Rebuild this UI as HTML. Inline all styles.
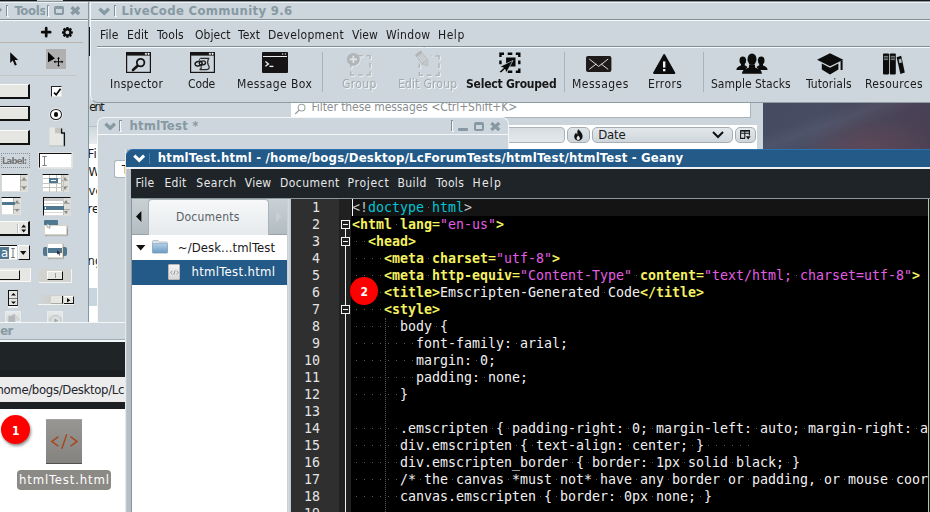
<!DOCTYPE html>
<html lang="en"><head><meta charset="utf-8"><title>desktop</title>
<style>
*{box-sizing:border-box;margin:0;padding:0}
html,body{width:930px;height:512px;overflow:hidden;background:#ccd6dc}
body{position:relative;font-family:"DejaVu Sans Condensed","Liberation Sans",sans-serif;font-size:12px;color:#1a1a1a}
.a{position:absolute}
.t{position:absolute;white-space:pre;height:20px}
svg{position:absolute;overflow:visible}
.code{position:absolute;left:352px;white-space:pre;font-family:"DejaVu Sans Mono","Liberation Mono",monospace;font-size:13.29px;letter-spacing:.003px;line-height:17px;height:17px;color:#f0f0f0}
.ln{position:absolute;left:291px;width:29px;text-align:right;font-family:"DejaVu Sans Mono","Liberation Mono",monospace;font-size:13.29px;letter-spacing:.003px;line-height:17px;height:17px;color:#e4e4e4}
.k{color:#f4f060;font-weight:bold}
.e{color:#f4f060}
.v{color:#e45ee4}
.d{color:#00c4d4}
.g{color:#c8c8c8}
.w{background-image:radial-gradient(circle at 4.5px 50%,#5c5c5c 0,#5c5c5c .5px,rgba(92,92,92,0) .8px);background-size:8px 100%}
</style></head><body>
<div class="a" style="left:0px;top:0px;width:930px;height:1px;background:#14171a;"></div>
<div class="a" style="left:0px;top:1px;width:930px;height:1px;background:#8d969b;"></div>
<div class="a" style="left:37px;top:0px;width:26px;height:1px;background:#c4ccd0;"></div>
<div class="a" style="left:762.5px;top:102.5px;width:167.5px;height:46px;background:linear-gradient(108deg,#454b61 0%,#484d64 35%,#4a4659 62%,#493f53 100%);"><div class="a" style="left:30px;top:14px;width:138px;height:32px;background:radial-gradient(ellipse at 55% 125%,rgba(112,74,86,.6),rgba(112,74,86,0) 72%)"></div><div class="a" style="left:0;top:0;width:168px;height:46px;background:linear-gradient(160deg,rgba(255,255,255,0) 30%,rgba(140,150,175,.10) 42%,rgba(255,255,255,0) 56%)"></div></div>
<div class="a" style="left:90px;top:103px;width:672.5px;height:15px;background:#ccd6dc;"></div>
<div class="a" style="left:291px;top:103px;width:460px;height:15.4px;background:#fff;border-bottom:1px solid #aab4ba;border-right:1px solid #aab4ba"></div>
<svg style="left:294px;top:103px" width="13" height="13" viewBox="0 0 13 13"><circle cx="7.6" cy="4.6" r="3.4" fill="none" stroke="#9aa0a4" stroke-width="1.1"/><path d="M5.2 7 L1.2 11" stroke="#9aa0a4" stroke-width="1.3"/></svg>
<span class="t" style="left:311.50px;top:96.80px;font-size:12px;line-height:20px;color:#8a8e92;letter-spacing:-0.063px;">Filter these messages &lt;Ctrl+Shift+K&gt;</span>
<span class="t" style="left:89.20px;top:96.80px;font-size:12.5px;line-height:20px;color:#1a1a1a;letter-spacing:-1.552px;font-family:"Liberation Sans",sans-serif;">ent</span>
<div class="a" style="left:508px;top:118px;width:249px;height:7px;background:#cbd5db;"></div>
<div class="a" style="left:508px;top:125px;width:249px;height:24px;background:#fff;"></div>
<div class="a" style="left:757px;top:102px;width:5.5px;height:47px;background:#ccd6dc;"></div>
<div class="a" style="left:500px;top:127px;width:64.5px;height:15.5px;background:linear-gradient(#d6dde1,#e4e9ec);border:1px solid #aab4ba;border-radius:4px"></div>
<div class="a" style="left:567px;top:127px;width:22.5px;height:15.5px;background:linear-gradient(#dde3e7,#cfd7dc);border:1px solid #a4aeb4;border-radius:5px"></div>
<svg style="left:573px;top:129px" width="11" height="12" viewBox="0 0 11 12"><path d="M5.2 0.3 C6.8 2 9.6 4 9.6 7.2 C9.6 10 7.6 11.7 5.3 11.7 C3 11.7 1.2 10 1.2 7.6 C1.2 5.6 2.4 4.4 3.2 3.4 C3.3 4.6 3.8 5.2 4.4 5.4 C4.2 3.4 4.4 1.6 5.2 0.3 Z" fill="#111"/><path d="M5.4 11 C4.3 11 3.6 10.2 3.6 9.2 C3.6 8 4.6 7.4 5 6.4 C5.9 7.2 6.9 8 6.9 9.3 C6.9 10.3 6.3 11 5.4 11Z" fill="#dfe5e8"/></svg>
<div class="a" style="left:592px;top:127px;width:141px;height:15.5px;background:linear-gradient(#e2e7ea,#cfd7dc);border:1px solid #a4aeb4;border-radius:5px"></div>
<span class="t" style="left:598.30px;top:124.90px;font-size:13px;line-height:20px;color:#1a1a1a;letter-spacing:-0.219px;">Date</span>
<svg style="left:712px;top:130.5px" width="12" height="8" viewBox="0 0 12 8"><path d="M1 1 L6 6 L11 1" fill="none" stroke="#111" stroke-width="2"/></svg>
<div class="a" style="left:735px;top:127px;width:21px;height:15.5px;background:linear-gradient(#e2e7ea,#cfd7dc);border:1px solid #a4aeb4;border-radius:5px"></div>
<svg style="left:740px;top:130px" width="11" height="10" viewBox="0 0 11 10"><path d="M0.6 0.6 H9.4 V5.4 M0.6 0.6 V8.4 H5 M0.6 3.2 H9.4 M4.8 0.6 V8.4" fill="none" stroke="#1a1a1a" stroke-width="1.1"/><path d="M0.6 0.8 H9.4" stroke="#1a1a1a" stroke-width="1.5"/><path d="M5.8 6.2 H10.6 L8.2 9.4 Z" fill="#111"/></svg>
<div class="a" style="left:88.5px;top:126px;width:9.5px;height:18px;background:linear-gradient(#d0d8dc,#e6ebed);border-top:1px solid #b4bec4"></div>
<div class="a" style="left:88.5px;top:144px;width:9.5px;height:178px;background:#fff;"></div>
<div class="a" style="left:89px;top:288px;width:8.5px;height:18px;background:#c9d5dc;"></div>
<span class="t" style="left:87.60px;top:143.80px;font-size:13px;line-height:20px;color:#1a1a1a;width:10.5px;overflow:hidden;">Fi</span>
<span class="t" style="left:88.60px;top:161.50px;font-size:13px;line-height:20px;color:#1a1a1a;width:10.5px;overflow:hidden;">W</span>
<span class="t" style="left:88.60px;top:180.50px;font-size:13px;line-height:20px;color:#1a1a1a;width:10.5px;overflow:hidden;">ve</span>
<span class="t" style="left:87.60px;top:199.00px;font-size:13px;line-height:20px;color:#1a1a1a;width:10.5px;overflow:hidden;">re</span>
<span class="t" style="left:87.60px;top:250.50px;font-size:13px;line-height:20px;color:#1a1a1a;width:10.5px;overflow:hidden;">ng</span>
<div class="a" style="left:97px;top:117px;width:412px;height:34px;background:#ccd6dc;border:1px solid #f4f7f8;border-bottom:none;border-radius:7px 7px 0 0"></div>
<div class="a" style="left:98px;top:134px;width:410px;height:1px;background:#f4f7f8;"></div>
<div class="a" style="left:98px;top:135px;width:30px;height:187px;background:#ccd6dc;"></div>
<div class="a" style="left:97px;top:135px;width:1px;height:187px;background:#f4f7f8;"></div>
<svg style="left:104px;top:121.6px" width="12.4" height="8.6" viewBox="0 0 12.4 8.6"><path d="M1.5 1.7 L6.2 6.2 L10.9 1.7" fill="none" stroke="#8799a2" stroke-width="3.3" stroke-linejoin="miter"/></svg>
<div class="a" style="left:120.4px;top:121px;width:1px;height:11px;background:#f7f9fa;"></div><div class="a" style="left:120.4px;top:131px;width:2px;height:1px;background:#f7f9fa;"></div><div class="a" style="left:119.4px;top:120px;width:1px;height:11px;background:#7f9099;"></div><div class="a" style="left:119.4px;top:120px;width:2.4px;height:1px;background:#7f9099;"></div>
<span class="t" style="left:129.40px;top:116.00px;font-size:13px;line-height:20px;color:#8799a2;font-weight:700;letter-spacing:0.219px;">htmlTest *</span>
<div class="a" style="left:452px;top:121px;width:1px;height:11px;background:#f7f9fa;"></div><div class="a" style="left:452px;top:131px;width:2px;height:1px;background:#f7f9fa;"></div><div class="a" style="left:451px;top:120px;width:1px;height:11px;background:#7f9099;"></div><div class="a" style="left:451px;top:120px;width:2.4px;height:1px;background:#7f9099;"></div>
<div class="a" style="left:458.3px;top:128.3px;width:9.4px;height:2.6px;background:#8799a2;border-radius:1px"></div>
<div class="a" style="left:474.2px;top:121.8px;width:9.4px;height:9px;background:transparent;border:2px solid #8799a2;border-top-width:3px;border-radius:2px"></div>
<svg style="left:489.5px;top:121.8px" width="10.6" height="9" viewBox="0 0 10.6 9"><path d="M1.3 1 L9.3 8 M9.3 1 L1.3 8" stroke="#8799a2" stroke-width="3.2"/></svg>
<div class="a" style="left:114px;top:159.5px;width:14px;height:18px;background:#fff;border:1px solid #aab4ba;border-right:none;border-radius:3px 0 0 3px"></div>
<span class="t" style="left:121.80px;top:159.80px;font-size:13px;line-height:20px;color:#1a1a1a;">T</span>
<div class="a" style="left:0px;top:2px;width:88.5px;height:320px;background:#ccd6dc;border-right:1px solid #8398a5"></div>
<svg style="left:-10px;top:6.5px" width="12.4" height="8.6" viewBox="0 0 12.4 8.6"><path d="M1.5 1.7 L6.2 6.2 L10.9 1.7" fill="none" stroke="#8799a2" stroke-width="3.3" stroke-linejoin="miter"/></svg>
<div class="a" style="left:7px;top:6px;width:1px;height:11px;background:#f7f9fa;"></div><div class="a" style="left:7px;top:16px;width:2px;height:1px;background:#f7f9fa;"></div><div class="a" style="left:6px;top:5px;width:1px;height:11px;background:#7f9099;"></div><div class="a" style="left:6px;top:5px;width:2.4px;height:1px;background:#7f9099;"></div>
<div class="a" style="left:14px;top:2px;width:31.3px;height:17px;background:transparent;overflow:hidden"><span class="t" style="left:0.40px;top:-1.50px;font-size:13px;line-height:20px;color:#8799a2;font-weight:700;letter-spacing:-0.308px;">Tools</span></div>
<div class="a" style="left:47.6px;top:6px;width:1px;height:11px;background:#f7f9fa;"></div><div class="a" style="left:47.6px;top:16px;width:2px;height:1px;background:#f7f9fa;"></div><div class="a" style="left:46.6px;top:5px;width:1px;height:11px;background:#7f9099;"></div><div class="a" style="left:46.6px;top:5px;width:2.4px;height:1px;background:#7f9099;"></div>
<div class="a" style="left:54.4px;top:6.4px;width:9.4px;height:8.8px;background:transparent;border:2px solid #8799a2;border-top-width:3px;border-radius:2px"></div>
<svg style="left:69.8px;top:6.2px" width="10.6" height="9.2" viewBox="0 0 10.6 9.2"><path d="M1.5 1.2 L9.1 8 M9.1 1.2 L1.5 8" stroke="#8799a2" stroke-width="3.5"/></svg>
<div class="a" style="left:0px;top:2px;width:88px;height:1px;background:#eef2f4;"></div>
<div class="a" style="left:0px;top:19px;width:88px;height:1px;background:#7f9099;"></div>
<div class="a" style="left:0px;top:20px;width:88px;height:1px;background:#f7f9fa;"></div>
<svg style="left:41px;top:27.3px" width="10.4" height="10.4" viewBox="0 0 10.4 10.4"><path d="M5.2 1.2 V9.2 M1.2 5.2 H9.2" stroke="#0c0c0c" stroke-width="2.7" stroke-linecap="round"/></svg>
<svg style="left:62px;top:27.2px" width="10.8" height="10.8" viewBox="-5.4 -5.4 10.8 10.8"><g fill="#0c0c0c"><rect x="-1.25" y="-5.4" width="2.5" height="3" rx="0.5" transform="rotate(0)"/><rect x="-1.25" y="-5.4" width="2.5" height="3" rx="0.5" transform="rotate(45)"/><rect x="-1.25" y="-5.4" width="2.5" height="3" rx="0.5" transform="rotate(90)"/><rect x="-1.25" y="-5.4" width="2.5" height="3" rx="0.5" transform="rotate(135)"/><rect x="-1.25" y="-5.4" width="2.5" height="3" rx="0.5" transform="rotate(180)"/><rect x="-1.25" y="-5.4" width="2.5" height="3" rx="0.5" transform="rotate(225)"/><rect x="-1.25" y="-5.4" width="2.5" height="3" rx="0.5" transform="rotate(270)"/><rect x="-1.25" y="-5.4" width="2.5" height="3" rx="0.5" transform="rotate(315)"/></g><circle r="3" fill="none" stroke="#0c0c0c" stroke-width="2.1"/></svg>
<div class="a" style="left:0px;top:42px;width:83px;height:1px;background:#b9b4ae;"></div>
<svg style="left:10px;top:52px" width="9" height="15" viewBox="0 0 9 15"><path d="M0.2 0.3 L0.2 11 L2.8 8.6 L4.8 13.6 L6.8 12.8 L4.7 7.9 L8.2 7.9 Z" fill="#0a0a0a"/></svg>
<div class="a" style="left:46px;top:49px;width:20px;height:19.7px;background:#b0b0b0;"></div>
<svg style="left:47.9px;top:51.7px" width="16" height="15" viewBox="0 0 16 15"><path d="M0 0 L0 10.3 L6.9 6.4 Z" fill="#050505"/><path d="M10.5 5.6 V14 M6.3 9.8 H14.7" stroke="#050505" stroke-width="1"/><path d="M10.5 4.9 L9.1 6.7 H11.9Z M10.5 14.7 L9.1 12.9 H11.9Z M5.6 9.8 L7.4 8.4 V11.2Z M15.4 9.8 L13.6 8.4 V11.2Z" fill="#050505"/></svg>
<div class="a" style="left:0px;top:75px;width:76px;height:1px;background:#c2c5c5;"></div>
<div class="a" style="left:-2px;top:84px;width:31.7px;height:14.8px;background:#e6e7e3;border-top:1px solid #fbfbfb;border-left:1px solid #fbfbfb;border-right:2px solid #111;border-bottom:2px solid #111"></div>
<div class="a" style="left:-2px;top:106px;width:31.7px;height:14.8px;background:#e6e7e3;border-top:1px solid #fbfbfb;border-left:1px solid #fbfbfb;border-right:2px solid #111;border-bottom:2px solid #111"></div>
<div class="a" style="left:-2px;top:106px;width:31.7px;height:1.4px;background:#111;"></div>
<div class="a" style="left:-2px;top:107.4px;width:29.7px;height:1px;background:#fbfbfb;"></div>
<div class="a" style="left:-2px;top:129.6px;width:31.7px;height:15.2px;background:#e6e7e3;border-top:1px solid #fbfbfb;border-left:1px solid #fbfbfb;border-right:2px solid #111;border-bottom:2px solid #111"></div>
<div class="a" style="left:51px;top:86px;width:11.2px;height:11.4px;background:#fff;border-top:1.5px solid #222;border-left:1.5px solid #222;border-right:1px solid #e4e4e0;border-bottom:1px solid #e4e4e0"></div>
<svg style="left:52.5px;top:87.5px" width="9" height="9" viewBox="0 0 9 9"><path d="M1 4.6 L3.2 6.8 L7.6 0.8" fill="none" stroke="#0a0a0a" stroke-width="1.7"/></svg>
<div class="a" style="left:49.6px;top:108.6px;width:12.4px;height:11.6px;background:#fff;border:1.5px solid #1a1a1a;border-radius:50%;box-shadow:0 0 0 0.8px #f0f0f0"></div>
<div class="a" style="left:53.6px;top:112.2px;width:4.6px;height:4.6px;background:#0a0a0a;border-radius:50%"></div>
<svg style="left:49px;top:126.6px" width="16.5" height="19.6" viewBox="0 0 16.5 19.6"><path d="M0.5 0.5 H6 V6.5 H14.2 V18.5 H0.5Z" fill="#e6e7e3"/><path d="M6 0.9 H13 V6 H6Z" fill="#c4c5c1"/><path d="M12.6 1.6 V6 H15.4 V19.2" fill="none" stroke="#111" stroke-width="1.3"/><path d="M15.4 19 H0.4" stroke="#b9bcb8" stroke-width="0.8"/></svg>
<div class="a" style="left:1px;top:152.7px;width:29px;height:15.4px;background:transparent;border:1px dotted #8c9296"></div>
<span class="t" style="left:2.20px;top:150.70px;font-size:9.5px;line-height:20px;color:#747474;font-weight:700;letter-spacing:-0.851px;will-change:transform;">Label:</span>
<div class="a" style="left:39.3px;top:153.3px;width:32.8px;height:14.8px;background:#fff;border-top:1.6px solid #111;border-left:1.6px solid #111;border-right:1px solid #e6e6e2;border-bottom:1px solid #e6e6e2;box-shadow:0 0 0 0.7px #e8e8e4"></div>
<svg style="left:42px;top:156px" width="5" height="10" viewBox="0 0 5 10"><path d="M0.3 0.5 H4.7 M0.3 9.5 H4.7 M2.5 0.5 V9.5" stroke="#777" stroke-width="0.9"/></svg>
<div class="a" style="left:1.3px;top:173.7px;width:26.7px;height:18.3px;background:#fff;border-top:1.5px solid #111;border-left:1px solid #d8d8d2;border-right:1px solid #e2e2dc;border-bottom:1px solid #e2e2dc"></div><div class="a" style="left:20.0px;top:175.2px;width:7px;height:15.8px;background:#dcdcd6;border-left:1px solid #b8b8b2"></div><div class="a" style="left:20.0px;top:179.73899999999998px;width:7px;height:1px;background:#aaa;"></div><div class="a" style="left:20.0px;top:185.778px;width:7px;height:1px;background:#aaa;"></div><svg style="left:21.5px;top:177.2px" width="4" height="3" viewBox="0 0 4 3"><path d="M0 3 L2 0 L4 3Z" fill="#888"/></svg><svg style="left:21.5px;top:186.5px" width="4" height="3" viewBox="0 0 4 3"><path d="M0 0 L2 3 L4 0Z" fill="#888"/></svg>
<div class="a" style="left:42.4px;top:173.7px;width:27px;height:18.3px;background:#fff;border-top:1.5px solid #111;border-left:1px solid #d8d8d2;border-right:1px solid #e2e2dc;border-bottom:1px solid #e2e2dc"></div><div class="a" style="left:61.400000000000006px;top:175.2px;width:7px;height:15.8px;background:#dcdcd6;border-left:1px solid #b8b8b2"></div><div class="a" style="left:61.400000000000006px;top:179.73899999999998px;width:7px;height:1px;background:#aaa;"></div><div class="a" style="left:61.400000000000006px;top:185.778px;width:7px;height:1px;background:#aaa;"></div><svg style="left:62.900000000000006px;top:177.2px" width="4" height="3" viewBox="0 0 4 3"><path d="M0 3 L2 0 L4 3Z" fill="#888"/></svg><svg style="left:62.900000000000006px;top:186.5px" width="4" height="3" viewBox="0 0 4 3"><path d="M0 0 L2 3 L4 0Z" fill="#888"/></svg>
<div class="a" style="left:49.3px;top:175px;width:0.8px;height:17px;background:#c4c4be;"></div>
<div class="a" style="left:56px;top:175px;width:0.8px;height:17px;background:#c4c4be;"></div>
<div class="a" style="left:63px;top:175px;width:0.8px;height:17px;background:#c4c4be;"></div>
<div class="a" style="left:43.4px;top:178.3px;width:19px;height:0.8px;background:#c4c4be;"></div>
<div class="a" style="left:43.4px;top:182.8px;width:19px;height:0.8px;background:#c4c4be;"></div>
<div class="a" style="left:43.4px;top:187.3px;width:19px;height:0.8px;background:#c4c4be;"></div>
<div class="a" style="left:49.3px;top:178.3px;width:8.8px;height:4.8px;background:#4f7890;"></div>
<div class="a" style="left:51.3px;top:180.2px;width:4.8px;height:1px;background:#fff;"></div>
<div class="a" style="left:1.3px;top:196.7px;width:19.7px;height:18px;background:#fff;border-top:1.5px solid #111;border-left:1px solid #d8d8d2;border-right:1px solid #e2e2dc;border-bottom:1px solid #e2e2dc"></div><div class="a" style="left:13.0px;top:198.2px;width:7px;height:15.5px;background:#dcdcd6;border-left:1px solid #b8b8b2"></div><div class="a" style="left:13.0px;top:202.64px;width:7px;height:1px;background:#aaa;"></div><div class="a" style="left:13.0px;top:208.57999999999998px;width:7px;height:1px;background:#aaa;"></div><svg style="left:14.5px;top:200.2px" width="4" height="3" viewBox="0 0 4 3"><path d="M0 3 L2 0 L4 3Z" fill="#888"/></svg><svg style="left:14.5px;top:209.2px" width="4" height="3" viewBox="0 0 4 3"><path d="M0 0 L2 3 L4 0Z" fill="#888"/></svg>
<div class="a" style="left:2.3px;top:202px;width:12.5px;height:3px;background:#4f7890;"></div>
<div class="a" style="left:42.7px;top:196.7px;width:28px;height:19.3px;background:#fff;border:1.5px solid #111;border-right:1px solid #ddd;border-bottom:1px solid #ddd"></div><div class="a" style="left:62.7px;top:198.2px;width:7px;height:16.8px;background:#dcdcd6;border-left:1px solid #b8b8b2"></div><div class="a" style="left:62.7px;top:203.069px;width:7px;height:1px;background:#aaa;"></div><div class="a" style="left:62.7px;top:209.438px;width:7px;height:1px;background:#aaa;"></div><svg style="left:64.2px;top:200.2px" width="4" height="3" viewBox="0 0 4 3"><path d="M0 3 L2 0 L4 3Z" fill="#888"/></svg><svg style="left:64.2px;top:210.5px" width="4" height="3" viewBox="0 0 4 3"><path d="M0 0 L2 3 L4 0Z" fill="#888"/></svg>
<div class="a" style="left:44.2px;top:198.2px;width:19.5px;height:3.3px;background:#c8c8c8;"></div>
<div class="a" style="left:44.2px;top:206px;width:19.5px;height:4px;background:#4f7890;"></div>
<div class="a" style="left:44.2px;top:202.6px;width:19.5px;height:0.7px;background:#d8d8d8;"></div>
<div class="a" style="left:44.2px;top:212.2px;width:19.5px;height:0.7px;background:#d8d8d8;"></div>
<div class="a" style="left:45px;top:207.3px;width:1.2px;height:1.8px;background:#fff;"></div>
<div class="a" style="left:-2px;top:221px;width:31.7px;height:14.7px;background:#e6e7e3;border-top:1px solid #fbfbfb;border-left:1px solid #fbfbfb;border-right:2px solid #111;border-bottom:2px solid #111"></div>
<div class="a" style="left:17px;top:223.5px;width:1px;height:9px;background:#bbb;border-right:1px solid #fff;width:2px"></div>
<svg style="left:21px;top:224px" width="5.4" height="9" viewBox="0 0 5.4 9"><path d="M0.2 3.4 L2.7 0.4 L5.2 3.4Z M0.2 5.6 L2.7 8.6 L5.2 5.6Z" fill="#111"/></svg>
<div class="a" style="left:44px;top:220px;width:14px;height:6px;background:#4f7890;border-radius:1px"></div>
<div class="a" style="left:44px;top:225px;width:23.4px;height:9.7px;background:#fff;border:1px solid #d8d4c8;box-shadow:0.5px 1px 1px rgba(120,110,90,.6)"></div>
<svg style="left:47px;top:222.5px" width="4" height="6" viewBox="0 0 4 6"><path d="M0.2 0.2 V4.6 L1.3 3.6 L2.2 5.6 L3 5.2 L2.2 3.4 H3.6Z" fill="#fff" stroke="#555" stroke-width="0.4"/></svg>
<div class="a" style="left:-1px;top:245px;width:18px;height:14.6px;background:#fff;border-top:1.5px solid #111;border-bottom:1px solid #e6e6e2"></div>
<div class="a" style="left:0px;top:246.5px;width:9.4px;height:12px;background:#4f7890;"></div>
<span class="t" style="left:1.00px;top:242.50px;font-size:13px;line-height:20px;color:#fff;">a</span>
<svg style="left:10.5px;top:248px" width="4" height="10" viewBox="0 0 4 10"><path d="M0.2 0.5 H3.8 M0.2 9.5 H3.8 M2 0.5 V9.5" stroke="#666" stroke-width="0.9"/></svg>
<div class="a" style="left:17.5px;top:245px;width:12.2px;height:14.6px;background:#e6e7e3;border-top:1px solid #fbfbfb;border-left:1px solid #fbfbfb;border-right:1.5px solid #111;border-bottom:1.5px solid #111"></div>
<svg style="left:20px;top:250.5px" width="6.4" height="4" viewBox="0 0 6.4 4"><path d="M0 0 H6.4 L3.2 4Z" fill="#111"/></svg>
<div class="a" style="left:43px;top:247px;width:23.7px;height:9px;background:#4f7890;border-radius:2px"></div>
<div class="a" style="left:47.3px;top:243.3px;width:16px;height:14.7px;background:#fff;border:1px solid #d8d4c8;box-shadow:0.5px 1px 1px rgba(120,110,90,.6)"></div>
<div class="a" style="left:48.3px;top:248.3px;width:14px;height:5px;background:#4f7890;"></div>
<svg style="left:57px;top:250px" width="4" height="6" viewBox="0 0 4 6"><path d="M0.2 0.2 V4.6 L1.3 3.6 L2.2 5.6 L3 5.2 L2.2 3.4 H3.6Z" fill="#222"/></svg>
<div class="a" style="left:-1px;top:268px;width:32px;height:13.7px;background:#e6e7e3;border-bottom:1px solid #f8f8f8;border-right:1px solid #f8f8f8"></div>
<div class="a" style="left:-2px;top:270px;width:22px;height:9.8px;background:#e6e7e3;border-top:1px solid #fbfbfb;border-left:1px solid #fbfbfb;border-right:1.5px solid #111;border-bottom:1.5px solid #111"></div>
<div class="a" style="left:39px;top:269px;width:33px;height:13.7px;background:#d2d3cf;border-bottom:1px solid #f4f4f2;border-right:1px solid #f4f4f2"></div>
<div class="a" style="left:47px;top:271px;width:15.8px;height:9.4px;background:#e6e7e3;border-top:1px solid #fbfbfb;border-left:1px solid #fbfbfb;border-right:1.5px solid #111;border-bottom:1.5px solid #111"></div>
<div class="a" style="left:54.5px;top:273px;width:1px;height:5px;background:#999;"></div>
<div class="a" style="left:8px;top:289.6px;width:10.2px;height:16.4px;background:#e6e7e3;border:1.4px solid #111;border-right:1px solid #555"></div>
<div class="a" style="left:9px;top:297.6px;width:8px;height:1px;background:#777;"></div>
<div class="a" style="left:7.6px;top:306px;width:10.8px;height:1.6px;background:#f2f4f4;"></div>
<svg style="left:10.6px;top:292.6px" width="5" height="11" viewBox="0 0 5 11"><path d="M0 2.6 L2.5 0 L5 2.6Z M0 8.4 L2.5 11 L5 8.4Z" fill="#111"/></svg>
<div class="a" style="left:38px;top:295.3px;width:36px;height:9.4px;background:linear-gradient(90deg,#cfd6d9,#cfd0cc 30%,#cfd0cc);border-bottom:1px solid #f4f4f2"></div>
<div class="a" style="left:50.5px;top:295.8px;width:12px;height:8.4px;background:#e6e7e3;border-right:1.5px solid #111;border-bottom:1px solid #aaa"></div>
<div class="a" style="left:63.5px;top:295.8px;width:10px;height:8.4px;background:#e6e7e3;border-right:1.5px solid #111;border-bottom:1px solid #111;border-top:1px solid #fff"></div>
<svg style="left:67px;top:297.6px" width="3.4" height="4.6" viewBox="0 0 3.4 4.6"><path d="M0 0 L3.4 2.3 L0 4.6Z" fill="#111"/></svg>
<div class="a" style="left:5.3px;top:311.3px;width:16px;height:10.7px;background:linear-gradient(#e8eaea,#d4d8d9);border:1px solid #e8ecee"></div>
<svg style="left:8px;top:314px" width="11" height="8" viewBox="0 0 11 8"><path d="M0.5 2 H3 L7 0 V8 H0.5Z M8 2 L10.5 6" fill="#b4b8b9" stroke="#c0c4c6" stroke-width="0.8"/></svg>
<div class="a" style="left:47.3px;top:311.3px;width:16px;height:10.7px;background:linear-gradient(#e8eaea,#d4d8d9);border:1px solid #e8ecee"></div>
<svg style="left:49px;top:313.6px" width="13" height="9" viewBox="0 0 13 9"><circle cx="6.5" cy="7" r="5.6" fill="#dadedf" stroke="#b8bcbd" stroke-width="0.9"/><path d="M5.4 4.4 L9.4 6.6 L5.4 8.8Z" fill="#a4a8a9"/></svg>
<div class="a" style="left:89.7px;top:2px;width:840.3px;height:101px;background:#ccd6dc;border-bottom:1px solid #8e9ca4;border-left:1px solid #f4f7f8;border-radius:0 0 0 8px"></div>
<div class="a" style="left:89px;top:27px;width:1px;height:29px;background:#14171a;"></div>
<svg style="left:97.7px;top:6.5px" width="12.4" height="8.6" viewBox="0 0 12.4 8.6"><path d="M1.5 1.7 L6.2 6.2 L10.9 1.7" fill="none" stroke="#8799a2" stroke-width="3.3" stroke-linejoin="miter"/></svg>
<div class="a" style="left:115px;top:6px;width:1px;height:11px;background:#f7f9fa;"></div><div class="a" style="left:115px;top:16px;width:2px;height:1px;background:#f7f9fa;"></div><div class="a" style="left:114px;top:5px;width:1px;height:11px;background:#7f9099;"></div><div class="a" style="left:114px;top:5px;width:2.4px;height:1px;background:#7f9099;"></div>
<span class="t" style="left:121.60px;top:0.50px;font-size:13px;line-height:20px;color:#8799a2;font-weight:700;letter-spacing:0.327px;">LiveCode Community 9.6</span>
<div class="a" style="left:91px;top:2px;width:839px;height:1px;background:#eef2f4;"></div>
<div class="a" style="left:91px;top:19px;width:839px;height:1px;background:#7f9099;"></div>
<div class="a" style="left:91px;top:20px;width:839px;height:1px;background:#f7f9fa;"></div>
<span class="t" style="left:99.60px;top:24.60px;font-size:12px;line-height:20px;color:#1a1a1a;letter-spacing:0.121px;will-change:transform;">File</span>
<span class="t" style="left:126.60px;top:24.60px;font-size:12px;line-height:20px;color:#1a1a1a;letter-spacing:0.141px;will-change:transform;">Edit</span>
<span class="t" style="left:157.30px;top:24.60px;font-size:12px;line-height:20px;color:#1a1a1a;letter-spacing:0.060px;will-change:transform;">Tools</span>
<span class="t" style="left:194.80px;top:24.60px;font-size:12px;line-height:20px;color:#1a1a1a;letter-spacing:0.054px;will-change:transform;">Object</span>
<span class="t" style="left:238.30px;top:24.60px;font-size:12px;line-height:20px;color:#1a1a1a;letter-spacing:0.109px;will-change:transform;">Text</span>
<span class="t" style="left:267.50px;top:24.60px;font-size:12px;line-height:20px;color:#1a1a1a;letter-spacing:0.304px;will-change:transform;">Development</span>
<span class="t" style="left:352.00px;top:24.60px;font-size:12px;line-height:20px;color:#1a1a1a;letter-spacing:0.079px;will-change:transform;">View</span>
<span class="t" style="left:386.00px;top:24.60px;font-size:12px;line-height:20px;color:#1a1a1a;letter-spacing:0.317px;will-change:transform;">Window</span>
<span class="t" style="left:437.60px;top:24.60px;font-size:12px;line-height:20px;color:#1a1a1a;letter-spacing:0.545px;will-change:transform;">Help</span>
<div class="a" style="left:96.5px;top:46px;width:834px;height:1px;background:#7f9099;"></div>
<div class="a" style="left:96.5px;top:47px;width:834px;height:1px;background:#f7f9fa;"></div>
<span class="t" style="left:110.40px;top:74.00px;font-size:12px;line-height:20px;color:#1a1a1a;letter-spacing:0.310px;will-change:transform;">Inspector</span>
<span class="t" style="left:187.80px;top:74.00px;font-size:12px;line-height:20px;color:#1a1a1a;letter-spacing:-0.133px;will-change:transform;">Code</span>
<span class="t" style="left:236.60px;top:74.00px;font-size:12px;line-height:20px;color:#1a1a1a;letter-spacing:0.401px;will-change:transform;">Message Box</span>
<span class="t" style="left:571.60px;top:74.00px;font-size:12px;line-height:20px;color:#1a1a1a;letter-spacing:0.482px;will-change:transform;">Messages</span>
<span class="t" style="left:647.80px;top:74.00px;font-size:12px;line-height:20px;color:#1a1a1a;letter-spacing:0.389px;will-change:transform;">Errors</span>
<span class="t" style="left:711.40px;top:74.00px;font-size:12px;line-height:20px;color:#1a1a1a;letter-spacing:0.008px;will-change:transform;">Sample Stacks</span>
<span class="t" style="left:806.40px;top:74.00px;font-size:12px;line-height:20px;color:#1a1a1a;letter-spacing:0.075px;will-change:transform;">Tutorials</span>
<span class="t" style="left:864.60px;top:74.00px;font-size:12px;line-height:20px;color:#1a1a1a;letter-spacing:0.309px;will-change:transform;">Resources</span>
<span class="t" style="left:466.40px;top:74.00px;font-size:12px;line-height:20px;color:#161616;font-weight:700;letter-spacing:-0.222px;will-change:transform;">Select Grouped</span>
<span class="t" style="left:341.80px;top:74.00px;font-size:12px;line-height:20px;color:#a3abaf;letter-spacing:0.353px;text-shadow:1px 1px 0 #f4f7f8;will-change:transform;">Group</span>
<span class="t" style="left:397.80px;top:74.00px;font-size:12px;line-height:20px;color:#a3abaf;letter-spacing:0.209px;text-shadow:1px 1px 0 #f4f7f8;will-change:transform;">Edit Group</span>
<div class="a" style="left:321.5px;top:51.5px;width:1px;height:40px;background:#a9b4ba;"></div>
<div class="a" style="left:564px;top:51.5px;width:1px;height:40px;background:#a9b4ba;"></div>
<div class="a" style="left:703px;top:51.5px;width:1px;height:40px;background:#a9b4ba;"></div>
<svg style="left:126px;top:52px" width="25" height="21" viewBox="0 0 25 21"><rect x="0.6" y="0.6" width="23.8" height="19.8" fill="none" stroke="#161414" stroke-width="1.2"/><rect x="0" y="0" width="25" height="3.6" fill="#161414"/><rect x="19" y="0.9" width="1.9" height="1.9" fill="#dfe6ea" transform="rotate(45 19.95 1.85)"/><rect x="21.7" y="0.9" width="1.9" height="1.9" fill="#dfe6ea" transform="rotate(45 22.65 1.85)"/><circle cx="14.6" cy="10.6" r="3.8" fill="none" stroke="#161414" stroke-width="1.8"/><path d="M11.6 13.8 L7 18" stroke="#161414" stroke-width="2.6" stroke-linecap="round"/></svg>
<svg style="left:190px;top:52px" width="25" height="21" viewBox="0 0 25 21"><rect x="0.6" y="0.6" width="23.8" height="19.8" fill="none" stroke="#161414" stroke-width="1.2"/><rect x="0" y="0" width="25" height="3.6" fill="#161414"/><rect x="19" y="0.9" width="1.9" height="1.9" fill="#dfe6ea" transform="rotate(45 19.95 1.85)"/><rect x="21.7" y="0.9" width="1.9" height="1.9" fill="#dfe6ea" transform="rotate(45 22.65 1.85)"/><path d="M10.4 6.4 H18.6 C17.2 9.2 17.4 12 19.2 14.8 C19.4 16.8 18 17.6 16.6 17.6 H9.6 C11.2 17 11.6 15.6 11 14.2" fill="none" stroke="#2a2828" stroke-width="1.2"/><path d="M10.4 6.4 C9.2 6.8 9.2 8.2 10.2 8.6" fill="none" stroke="#2a2828" stroke-width="1"/><ellipse cx="8.6" cy="11.6" rx="3.6" ry="2.2" fill="none" stroke="#1c1a1a" stroke-width="1.5" transform="rotate(-12 8.6 11.6)"/><ellipse cx="12.4" cy="11" rx="3.2" ry="2" fill="none" stroke="#1c1a1a" stroke-width="1.3" transform="rotate(-12 12.4 11)"/></svg>
<svg style="left:262px;top:52px" width="26" height="21" viewBox="0 0 26 21"><rect x="0" y="0" width="26" height="21" rx="1" fill="#161414"/><rect x="1" y="4" width="24" height="1" fill="#e8eef0"/><circle cx="20.6" cy="2" r="0.8" fill="#ccd6dc"/><circle cx="23.4" cy="2" r="0.8" fill="#ccd6dc"/><path d="M3.4 9.6 L6.4 11.9 L3.4 14.2" fill="none" stroke="#f4f4f4" stroke-width="1.3"/><path d="M7.4 14.4 H11.4" stroke="#f4f4f4" stroke-width="1.3"/></svg>
<svg style="left:346px;top:51.5px" width="27" height="26" viewBox="0 0 27 26"><g transform="translate(1,1)"><path d="M4.8 7.1 V3.7 H8.2 M20.6 3.7 H24 V7.1 M24 19.6 V23 H20.6 M8.2 23 H4.8 V19.6 M12.100000000000001 3.7 H16.7 M12.100000000000001 23 H16.7 M4.8 11.05 V15.649999999999999 M24 11.05 V15.649999999999999" fill="none" stroke="#f0f4f5" stroke-width="1.5"/><circle cx="7" cy="7" r="6.5" fill="#f0f4f5"/></g><path d="M4.8 7.1 V3.7 H8.2 M20.6 3.7 H24 V7.1 M24 19.6 V23 H20.6 M8.2 23 H4.8 V19.6 M12.100000000000001 3.7 H16.7 M12.100000000000001 23 H16.7 M4.8 11.05 V15.649999999999999 M24 11.05 V15.649999999999999" fill="none" stroke="#b2b5b7" stroke-width="1.5"/><circle cx="7.4" cy="7.4" r="6.5" fill="#b2b5b7"/><path d="M7.4 3.8 V11 M3.8 7.4 H11" stroke="#dfe5e8" stroke-width="1.6"/></svg>
<svg style="left:416px;top:51px" width="27" height="26" viewBox="0 -0.8 27 26"><g transform="translate(1,1)"><path d="M3.4 7.6 V4.2 H6.8 M19.6 4.2 H23 V7.6 M23 20.1 V23.5 H19.6 M6.8 23.5 H3.4 V20.1 M10.899999999999999 4.2 H15.5 M10.899999999999999 23.5 H15.5 M3.4 11.55 V16.15 M23 11.55 V16.15" fill="none" stroke="#f0f4f5" stroke-width="1.5"/></g><path d="M3.4 7.6 V4.2 H6.8 M19.6 4.2 H23 V7.6 M23 20.1 V23.5 H19.6 M6.8 23.5 H3.4 V20.1 M10.899999999999999 4.2 H15.5 M10.899999999999999 23.5 H15.5 M3.4 11.55 V16.15 M23 11.55 V16.15" fill="none" stroke="#b2b5b7" stroke-width="1.5"/><rect x="0" y="0" width="14" height="16" fill="#ccd6dc" transform="rotate(-38 6 6) translate(0.4,-1)"/><g transform="rotate(-38 6 6)"><rect x="2" y="-0.6" width="7.6" height="3" rx="1.2" fill="#b2b5b7"/><rect x="2" y="3" width="7.6" height="7.6" fill="#bcc0c2"/><path d="M3.9 3.2 V10.4 M5.8 3.2 V10.4 M7.7 3.2 V10.4" stroke="#dfe4e6" stroke-width="0.8"/><path d="M2 10.8 H9.6 L5.8 16Z" fill="#c4c8ca" stroke="#b2b5b7" stroke-width="0.6"/></g></svg>
<svg style="left:498.5px;top:51.5px" width="22" height="22" viewBox="0 0 22 22"><path d="M1.45 5 V1.7 H5 M16.8 1.7 H20.3 V5 M20.3 16.4 V19.8 H16.8 M8.7 1.7 H13.3 M8.7 19.8 H13.3 M1.45 8.5 V12.3 M20.3 8.5 V12.3" fill="none" stroke="#080808" stroke-width="2.4"/><rect x="7.1" y="5.5" width="9.4" height="9" fill="#080808"/><path d="M14 8.5 L1.2 14.4 L4.5 15.9 L0.5 19.6 L1.9 21.1 L6 17.3 L7.3 20.8 Z" fill="#080808" stroke="#ccd6dc" stroke-width="0.7"/></svg>
<svg style="left:586px;top:55.8px" width="25.4" height="16" viewBox="0 0 25.4 16"><rect width="25.4" height="16" rx="2" fill="#1e1a1a"/><path d="M3.2 3 L12.7 10.4 L22.2 3 M3.2 13.4 L10.2 8 M22.2 13.4 L15.2 8" fill="none" stroke="#f0f0f0" stroke-width="0.9"/></svg>
<svg style="left:653px;top:53.6px" width="22.4" height="20.4" viewBox="0 0 22.4 20.4"><path d="M11.2 1.2 L21.2 19 H1.2Z" fill="#0c0c0c" stroke="#0c0c0c" stroke-width="2.2" stroke-linejoin="round"/><rect x="10" y="7.4" width="2.4" height="6.2" fill="#eef2f4"/><rect x="10" y="15" width="2.4" height="2.3" fill="#eef2f4"/></svg>
<svg style="left:736px;top:53.2px" width="32" height="21" viewBox="0 0 32 21"><g fill="#0c0c0c"><ellipse cx="6.8" cy="7.6" rx="3.3" ry="4"/><path d="M0.4 17 C0.6 14 3 13.4 5 12.6 V11 H8.8 V12.6 C10 13 11 13.4 11.4 14 L9 17Z"/><ellipse cx="25.2" cy="7.6" rx="3.3" ry="4"/><path d="M31.6 17 C31.4 14 29 13.4 27 12.6 V11 H23.2 V12.6 C22 13 21 13.4 20.6 14 L23 17Z"/><ellipse cx="16" cy="6.2" rx="4.5" ry="5.8"/><path d="M6 20.8 C6.2 16.6 9.6 15.6 13 14.4 V11.4 H19 V14.4 C22.4 15.6 25.8 16.6 26 20.8Z"/></g></svg>
<svg style="left:816.6px;top:53.2px" width="26.6" height="21.6" viewBox="0 0 26.6 21.6"><g fill="#0c0c0c"><path d="M13 0.3 L26.3 6.8 L13 13.3 L0 6.8Z"/><path d="M4.8 10.6 L13 14.8 L21.4 10.6 V16.6 L13 21.4 L4.8 16.6Z"/><rect x="23.6" y="7.4" width="2" height="9.6"/></g></svg>
<svg style="left:883px;top:53.2px" width="22" height="21.6" viewBox="0 0 22 21.6"><g fill="#0c0c0c"><rect x="0" y="0.4" width="6" height="21" rx="0.8"/><rect x="6.8" y="0.4" width="6" height="21" rx="0.8"/><path d="M13.6 4.2 L18.2 2.8 L21.8 19.6 L17.4 21Z"/></g><path d="M0.8 3.4 H5.2 M0.8 5 H5.2 M0.8 6.6 H5.2 M7.6 3.4 H12 M7.6 5 H12 M7.6 6.6 H12" stroke="#aeb6ba" stroke-width="0.7"/><path d="M15.6 6.4 L18.2 5.6 L19 9.4 L16.4 10.2Z" fill="#aeb6ba"/></svg>
<div class="a" style="left:0px;top:322px;width:125.5px;height:20px;background:#ccd6dc;"></div>
<div class="a" style="left:0px;top:322px;width:125.5px;height:1px;background:#f4f7f8;"></div>
<span class="t" style="left:0.30px;top:321.10px;font-size:13px;line-height:20px;color:#8799a2;font-weight:700;letter-spacing:-0.635px;">er</span>
<div class="a" style="left:0px;top:339px;width:125.5px;height:1px;background:#9fb0b9;"></div>
<div class="a" style="left:0px;top:340px;width:125.5px;height:2px;background:#f4f7f8;"></div>
<div class="a" style="left:0px;top:342px;width:125px;height:35px;background:#1f2427;"></div>
<div class="a" style="left:0px;top:370px;width:125px;height:7px;background:#1b1f22;"></div>
<div class="a" style="left:0px;top:377px;width:125px;height:25px;background:#ececec;"></div>
<div class="a" style="left:0px;top:377px;width:125px;height:25px;background:transparent;overflow:hidden"><span class="t" style="left:-3.60px;top:2.90px;font-size:13px;line-height:20px;color:#24242c;letter-spacing:-0.328px;">home/bogs/Desktop/Lc</span></div>
<div class="a" style="left:0px;top:402px;width:125px;height:6.6px;background:#1c2023;"></div>
<div class="a" style="left:0px;top:408.6px;width:125px;height:104px;background:#fff;"></div>
<div class="a" style="left:0.8px;top:415.3px;width:29px;height:29px;background:#ff0000;border-radius:50%;box-shadow:1px 2px 3px rgba(0,0,0,.45)"></div>
<span class="t" style="left:12.00px;top:420.80px;font-size:12px;line-height:20px;color:#fff;font-weight:700;font-family:"Liberation Sans",sans-serif;">1</span>
<div class="a" style="left:46.2px;top:419.2px;width:35.5px;height:44.5px;background:linear-gradient(#989692,#85837f);border-bottom:1px solid #55534f;border-top:1px solid #a4a29e"></div>
<svg style="left:50.8px;top:434px" width="26.8" height="15" viewBox="0 0 26.8 15"><path d="M7.4 2.6 L0.8 7.4 L7.4 12.2 M19.4 2.6 L26 7.4 L19.4 12.2 M15.8 0.3 L10.8 14.7" fill="none" stroke="#a84418" stroke-width="1.4"/></svg>
<div class="a" style="left:17.2px;top:470px;width:93.6px;height:20px;background:#8c8a86;border-radius:4px"></div>
<span class="t" style="left:19.00px;top:470.00px;font-size:13px;line-height:20px;color:#fff;letter-spacing:0.846px;">htmlTest.html</span>
<div class="a" style="left:125px;top:149px;width:7px;height:363px;background:linear-gradient(90deg,#e4e9ec 0,#e4e9ec 1.2px,#b5bfc5 1.6px,#b5bfc5 6px,#8a969c 6.2px);"></div>
<div class="a" style="left:126px;top:148.6px;width:804px;height:18.4px;background:#235a87;border-top:1px solid #2d70ab;border-radius:7px 0 0 0"></div>
<div class="a" style="left:126px;top:167px;width:804px;height:1.5px;background:#eef2f4;"></div>
<svg style="left:133px;top:153.6px" width="12.4" height="9" viewBox="0 0 12.4 9"><path d="M1.3 1.7 L6.2 6.4 L11.1 1.7" fill="none" stroke="#fff" stroke-width="3.1"/></svg>
<div class="a" style="left:149px;top:153px;width:1px;height:11px;background:#3f7db5;"></div>
<span class="t" style="left:157.80px;top:147.50px;font-size:13px;line-height:20px;color:#fff;font-weight:700;letter-spacing:0.206px;">htmlTest.html - /home/bogs/Desktop/LcForumTests/htmlTest/htmlTest - Geany</span>
<div class="a" style="left:131px;top:168.5px;width:799px;height:29.5px;background:#1e2428;"></div>
<span class="t" style="left:135.40px;top:172.60px;font-size:12px;line-height:20px;color:#e8e8e8;letter-spacing:0.287px;">File</span>
<span class="t" style="left:164.50px;top:172.60px;font-size:12px;line-height:20px;color:#e8e8e8;letter-spacing:0.275px;">Edit</span>
<span class="t" style="left:196.30px;top:172.60px;font-size:12px;line-height:20px;color:#e8e8e8;letter-spacing:0.535px;">Search</span>
<span class="t" style="left:244.80px;top:172.60px;font-size:12px;line-height:20px;color:#e8e8e8;letter-spacing:0.245px;">View</span>
<span class="t" style="left:280.00px;top:172.60px;font-size:12px;line-height:20px;color:#e8e8e8;letter-spacing:0.471px;">Document</span>
<span class="t" style="left:347.60px;top:172.60px;font-size:12px;line-height:20px;color:#e8e8e8;letter-spacing:0.691px;">Project</span>
<span class="t" style="left:397.40px;top:172.60px;font-size:12px;line-height:20px;color:#e8e8e8;letter-spacing:0.488px;">Build</span>
<span class="t" style="left:436.00px;top:172.60px;font-size:12px;line-height:20px;color:#e8e8e8;letter-spacing:0.360px;">Tools</span>
<span class="t" style="left:472.60px;top:172.60px;font-size:12px;line-height:20px;color:#e8e8e8;letter-spacing:1.211px;">Help</span>
<div class="a" style="left:131px;top:198px;width:799px;height:1px;background:#8a9a9c;"></div>
<div class="a" style="left:132px;top:198.6px;width:154.6px;height:313.4px;background:#fff;"></div>
<div class="a" style="left:132px;top:198.6px;width:154.6px;height:36px;background:linear-gradient(#c9d1d5,#b3bcc1);border-bottom:1px solid #98a2a8"></div>
<div class="a" style="left:147.5px;top:198.6px;width:121.5px;height:36px;background:linear-gradient(#f6f8f9,#e6eaec);border:1px solid #aab3b8;border-bottom:none;border-radius:4px 4px 0 0"></div>
<svg style="left:136.4px;top:211px" width="5.4" height="11" viewBox="0 0 5.4 11"><path d="M5.4 0 V11 L0 5.5Z" fill="#0c0c0c"/></svg>
<svg style="left:275.6px;top:211px" width="5.4" height="11" viewBox="0 0 5.4 11"><path d="M0 0 V11 L5.4 5.5Z" fill="#c9d0d4"/></svg>
<span class="t" style="left:175.90px;top:206.80px;font-size:12px;line-height:20px;color:#5a6268;letter-spacing:0.233px;">Documents</span>
<svg style="left:136px;top:245px" width="9.4" height="5.4" viewBox="0 0 9.4 5.4"><path d="M0 0 H9.4 L4.7 5.4Z" fill="#111"/></svg>
<svg style="left:152px;top:240px" width="16" height="13.4" viewBox="0 0 16 13.4"><defs><linearGradient id="fg" x1="0" y1="0" x2="0" y2="1"><stop offset="0" stop-color="#b4d0e6"/><stop offset="1" stop-color="#6a9cc4"/></linearGradient></defs><path d="M0.5 1.6 Q0.5 0.5 1.6 0.5 H6 L7.4 2 H14.4 Q15.5 2 15.5 3 V12.9 H0.5Z" fill="#dfe6ea" stroke="#a8b4bc" stroke-width="0.8"/><rect x="0.6" y="3.6" width="14.8" height="9.3" rx="0.8" fill="url(#fg)" stroke="#7aa0c0" stroke-width="0.6"/></svg>
<span class="t" style="left:177.80px;top:237.50px;font-size:13px;line-height:20px;color:#1a1a1a;letter-spacing:0.080px;">~/Desk...tmlTest</span>
<div class="a" style="left:132px;top:260.4px;width:154.6px;height:24.6px;background:#235a87;"></div>
<div class="a" style="left:168px;top:264px;width:12px;height:16px;background:linear-gradient(#f4f4f4,#d8d8d8);border:1px solid #b8b8b8;border-radius:1px"></div>
<svg style="left:169.6px;top:269.6px" width="9" height="5" viewBox="0 0 9 5"><path d="M2.4 0.8 L0.6 2.5 L2.4 4.2 M6.6 0.8 L8.4 2.5 L6.6 4.2 M5.2 0.4 L3.8 4.6" fill="none" stroke="#777" stroke-width="0.7"/></svg>
<span class="t" style="left:191.40px;top:262.30px;font-size:13px;line-height:20px;color:#fff;letter-spacing:0.321px;">htmlTest.html</span>
<div class="a" style="left:286.6px;top:198.6px;width:4.4px;height:313.4px;background:linear-gradient(90deg,#c3ccd1,#d4dce0 40%,#b8c2c7);"></div>
<div class="a" style="left:291px;top:199px;width:639px;height:313px;background:#000;"></div>
<div class="a" style="left:291px;top:199px;width:48.2px;height:313px;background:#2f2f2f;"></div>
<div class="a" style="left:339.2px;top:199px;width:11.8px;height:313px;background:#202020;"></div>
<div class="a" style="left:351px;top:199px;width:579px;height:17px;background:#141414;"></div>
<div class="a" style="left:352px;top:199px;width:1px;height:17px;background:#fff;"></div>
<div class="a" style="left:928px;top:199px;width:1px;height:313px;background:#a9c9a9;"></div>
<div class="a" style="left:929px;top:199px;width:1px;height:313px;background:#1c1c1c;"></div>
<div class="a" style="left:345px;top:229px;width:1px;height:283px;background:#f0f0f0;"></div>
<div class="a" style="left:341px;top:220px;width:9px;height:9px;background:#1f1f1f;border:1px solid #f4f4f4"></div>
<div class="a" style="left:343px;top:224px;width:5px;height:1px;background:#f4f4f4;"></div>
<div class="a" style="left:341px;top:237px;width:9px;height:9px;background:#1f1f1f;border:1px solid #f4f4f4"></div>
<div class="a" style="left:343px;top:241px;width:5px;height:1px;background:#f4f4f4;"></div>
<div class="a" style="left:341px;top:305px;width:9px;height:9px;background:#1f1f1f;border:1px solid #f4f4f4"></div>
<div class="a" style="left:343px;top:309px;width:5px;height:1px;background:#f4f4f4;"></div>
<div class="a" style="left:385px;top:318px;width:1px;height:194px;background:transparent;border-left:1px dotted #565656"></div>
<div class="a" style="left:0;top:199px;width:928px;height:313px;overflow:hidden">
<div class="ln" style="top:0px">1</div><div class="code" style="top:0px"><span class="g">&lt;!</span><span class="d">doctype</span><span class="w"> </span><span class="d">html</span><span class="g">&gt;</span></div>
<div class="ln" style="top:17px">2</div><div class="code" style="top:17px"><span class="k">&lt;html</span><span class="w"> </span><span class="k">lang</span><span class="e">=</span><span class="v">&quot;en-us&quot;</span><span class="k">&gt;</span></div>
<div class="ln" style="top:34px">3</div><div class="code" style="top:34px"><span class="w">  </span><span class="k">&lt;head&gt;</span></div>
<div class="ln" style="top:51px">4</div><div class="code" style="top:51px"><span class="w">    </span><span class="k">&lt;meta</span><span class="w"> </span><span class="k">charset</span><span class="e">=</span><span class="v">&quot;utf-8&quot;</span><span class="k">&gt;</span></div>
<div class="ln" style="top:68px">5</div><div class="code" style="top:68px"><span class="w">    </span><span class="k">&lt;meta</span><span class="w"> </span><span class="k">http-equiv</span><span class="e">=</span><span class="v">&quot;Content-Type&quot;</span><span class="w"> </span><span class="k">content</span><span class="e">=</span><span class="v">&quot;text/html;</span><span class="w"> </span><span class="v">charset=utf-8&quot;</span><span class="k">&gt;</span></div>
<div class="ln" style="top:85px">6</div><div class="code" style="top:85px"><span class="w">    </span><span class="k">&lt;title&gt;</span>Emscripten-Generated<span class="w"> </span>Code<span class="k">&lt;/title&gt;</span></div>
<div class="ln" style="top:102px">7</div><div class="code" style="top:102px"><span class="w">    </span><span class="k">&lt;style&gt;</span></div>
<div class="ln" style="top:119px">8</div><div class="code" style="top:119px"><span class="w">      </span>body<span class="w"> </span>{</div>
<div class="ln" style="top:136px">9</div><div class="code" style="top:136px"><span class="w">        </span>font-family:<span class="w"> </span>arial;</div>
<div class="ln" style="top:153px">10</div><div class="code" style="top:153px"><span class="w">        </span>margin:<span class="w"> </span>0;</div>
<div class="ln" style="top:170px">11</div><div class="code" style="top:170px"><span class="w">        </span>padding:<span class="w"> </span>none;</div>
<div class="ln" style="top:187px">12</div><div class="code" style="top:187px"><span class="w">      </span>}</div>
<div class="ln" style="top:204px">13</div><div class="code" style="top:204px"></div>
<div class="ln" style="top:221px">14</div><div class="code" style="top:221px"><span class="w">      </span>.emscripten<span class="w"> </span>{<span class="w"> </span>padding-right:<span class="w"> </span>0;<span class="w"> </span>margin-left:<span class="w"> </span>auto;<span class="w"> </span>margin-right:<span class="w"> </span>auto;<span class="w"> </span>display:<span class="w"> </span>block;<span class="w"> </span>}</div>
<div class="ln" style="top:238px">15</div><div class="code" style="top:238px"><span class="w">      </span>div.emscripten<span class="w"> </span>{<span class="w"> </span>text-align:<span class="w"> </span>center;<span class="w"> </span>}<span class="w">      </span></div>
<div class="ln" style="top:255px">16</div><div class="code" style="top:255px"><span class="w">      </span>div.emscripten_border<span class="w"> </span>{<span class="w"> </span>border:<span class="w"> </span>1px<span class="w"> </span>solid<span class="w"> </span>black;<span class="w"> </span>}</div>
<div class="ln" style="top:272px">17</div><div class="code" style="top:272px"><span class="w">      </span>/*<span class="w"> </span>the<span class="w"> </span>canvas<span class="w"> </span>*must<span class="w"> </span>not*<span class="w"> </span>have<span class="w"> </span>any<span class="w"> </span>border<span class="w"> </span>or<span class="w"> </span>padding,<span class="w"> </span>or<span class="w"> </span>mouse<span class="w"> </span>coords<span class="w"> </span>will<span class="w"> </span>be<span class="w"> </span>wrong<span class="w"> </span>*/</div>
<div class="ln" style="top:289px">18</div><div class="code" style="top:289px"><span class="w">      </span>canvas.emscripten<span class="w"> </span>{<span class="w"> </span>border:<span class="w"> </span>0px<span class="w"> </span>none;<span class="w"> </span>}</div>
<div class="ln" style="top:306px">19</div><div class="code" style="top:306px"></div>
</div>
<div class="a" style="left:350px;top:277.3px;width:28px;height:28px;background:#ff0000;border-radius:50%;box-shadow:1px 2px 3px rgba(0,0,0,.5)"></div>
<span class="t" style="left:360.40px;top:281.80px;font-size:12px;line-height:20px;color:#fff;font-weight:700;font-family:"Liberation Sans",sans-serif;">2</span>
</body></html>
